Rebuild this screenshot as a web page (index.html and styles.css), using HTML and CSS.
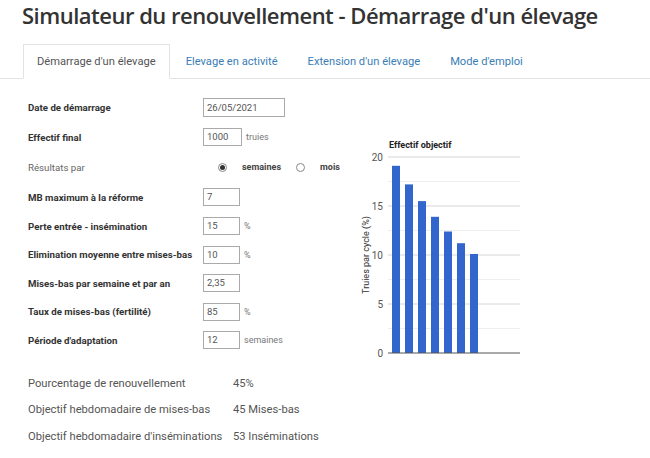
FILE: index.html
```html
<!DOCTYPE html>
<html lang="fr">
<head>
<meta charset="utf-8">
<title>Simulateur du renouvellement</title>
<link rel="stylesheet" href="styles.css">
</head>
<body>
<h1 class="title">Simulateur du renouvellement - Démarrage d'un élevage</h1>
<ul class="tabs">
  <li class="tab active">Démarrage d'un élevage</li>
  <li class="tab">Elevage en activité</li>
  <li class="tab">Extension d'un élevage</li>
  <li class="tab">Mode d'emploi</li>
</ul>
<div class="main">
  <div class="form">
    <div class="row r30"><span class="label">Date de démarrage</span><span class="field"><span class="input wide">26/05/2021</span></span></div>
    <div class="row r30"><span class="label">Effectif final</span><span class="field"><span class="input w39">1000</span><span class="unit">truies</span></span></div>
    <div class="row r30"><span class="label light">Résultats par</span><span class="field"><span class="radio checked"></span><span class="ropt">semaines</span><span class="radio"></span><span class="ropt">mois</span></span></div>
    <div class="row r30"><span class="label">MB maximum à la réforme</span><span class="field"><span class="input">7</span></span></div>
    <div class="row r28"><span class="label">Perte entrée - insémination</span><span class="field"><span class="input">15</span><span class="unit">%</span></span></div>
    <div class="row r28"><span class="label">Elimination moyenne entre mises-bas</span><span class="field"><span class="input">10</span><span class="unit">%</span></span></div>
    <div class="row r28"><span class="label">Mises-bas par semaine et par an</span><span class="field"><span class="input">2,35</span></span></div>
    <div class="row r28"><span class="label">Taux de mises-bas (fertilité)</span><span class="field"><span class="input">85</span><span class="unit">%</span></span></div>
    <div class="row r28"><span class="label">Période d'adaptation</span><span class="field"><span class="input">12</span><span class="unit">semaines</span></span></div>
  </div>
  <svg class="chart" width="180" height="235" viewBox="0 0 180 235">
    <text x="39" y="13" class="ctitle">Effectif objectif</text>
    <g class="minor">
      <line x1="38" y1="46.5" x2="170" y2="46.5"/>
      <line x1="38" y1="95.5" x2="170" y2="95.5"/>
      <line x1="38" y1="144.5" x2="170" y2="144.5"/>
      <line x1="38" y1="193.5" x2="170" y2="193.5"/>
    </g>
    <g class="major">
      <line x1="38" y1="22" x2="170" y2="22"/>
      <line x1="38" y1="71" x2="170" y2="71"/>
      <line x1="38" y1="120" x2="170" y2="120"/>
      <line x1="38" y1="169" x2="170" y2="169"/>
    </g>
    <g class="ylab">
      <text x="33" y="25.5">20</text>
      <text x="33" y="74.5">15</text>
      <text x="33" y="123.5">10</text>
      <text x="33" y="172.5">5</text>
      <text x="33" y="221.5">0</text>
    </g>
    <g class="bars">
      <rect x="42" y="30.8" width="8" height="187.2"/>
      <rect x="55" y="49.4" width="8" height="168.6"/>
      <rect x="68" y="66.1" width="8" height="151.9"/>
      <rect x="81" y="81.8" width="8" height="136.2"/>
      <rect x="94" y="96.5" width="8" height="121.5"/>
      <rect x="107" y="108.2" width="8" height="109.8"/>
      <rect x="120" y="119" width="8" height="99"/>
    </g>
    <line class="base" x1="38" y1="218" x2="170" y2="218"/>
    <text class="ytitle" x="0" y="0" transform="translate(19 120) rotate(-90)">Truies par cycle (%)</text>
  </svg>
</div>
<div class="results">
  <div class="rrow"><span>Pourcentage de renouvellement</span><span>45%</span></div>
  <div class="rrow"><span>Objectif hebdomadaire de mises-bas</span><span>45 Mises-bas</span></div>
  <div class="rrow"><span>Objectif hebdomadaire d'inséminations</span><span>53 Inséminations</span></div>
</div>
</body>
</html>
```
FILE: styles.css
```css
html, body {
  margin: 0;
  padding: 0;
  background: #fff;
}
body {
  font-family: Roboto, "Liberation Sans", sans-serif;
  color: #333;
}
.title {
  margin: 0;
  padding-left: 22px;
  font-family: "Open Sans", "Liberation Sans", sans-serif;
  font-weight: 600;
  font-size: 22px;
  line-height: 30px;
  letter-spacing: -0.5px;
  color: #333;
  white-space: nowrap;
}
.tabs {
  list-style: none;
  margin: 14px 0 0 0;
  padding: 0 0 0 23px;
  display: flex;
  border-bottom: 1px solid #e3e3e3;
}
.tab {
  margin-right: 2px;
  margin-bottom: -1px;
  padding: 0 13px;
  height: 33px;
  line-height: 33px;
  border: 1px solid transparent;
  font-size: 11.15px;
  color: #3a7db5;
  white-space: nowrap;
}
.tab.active {
  border-color: #e3e3e3;
  border-bottom-color: #fff;
  background: #fff;
  color: #555;
}
.main {
  display: flex;
  padding-top: 13px;
}
.form {
  width: 350px;
  padding-left: 28px;
  box-sizing: border-box;
}
.row {
  display: grid;
  grid-template-columns: 175px auto;
  align-items: center;
}
.r30 { height: 30px; }
.r28 { height: 28.5px; }
.label {
  font-size: 9.7px;
  font-weight: bold;
  color: #333;
  white-space: nowrap;
}
.label.light {
  font-weight: normal;
  color: #666;
}
.field {
  display: flex;
  align-items: center;
}
.input {
  box-sizing: border-box;
  width: 37px;
  height: 18px;
  border: 1px solid #aaa;
  padding: 0 3px;
  font-size: 9.5px;
  line-height: 16px;
  color: #555;
}
.input.wide { width: 82px; height: 19px; line-height: 17px; }
.input.w39 { width: 39px; }
.unit {
  margin-left: 4px;
  font-size: 9px;
  color: #777;
}
.radio {
  box-sizing: border-box;
  width: 9px;
  height: 9px;
  border: 1px solid #888;
  border-radius: 50%;
  margin-left: 15px;
  display: flex;
  align-items: center;
  justify-content: center;
}
.radio.checked::after {
  content: "";
  width: 5px;
  height: 5px;
  border-radius: 50%;
  background: #333;
}
.ropt {
  margin-left: 15px;
  font-size: 9px;
  font-weight: bold;
  color: #444;
}
.chart {
  display: block;
  margin-top: 43px;
  flex: none;
}
.ctitle {
  font-family: Roboto, "Liberation Sans", sans-serif;
  font-size: 9px;
  font-weight: bold;
  fill: #222;
}
.minor line { stroke: #eeeeee; stroke-width: 1; }
.major line { stroke: #d6d6d6; stroke-width: 1; }
.base { stroke: #555; stroke-width: 1; }
.ylab text {
  font-family: Roboto, "Liberation Sans", sans-serif;
  font-size: 10px;
  fill: #555;
  text-anchor: end;
}
.bars rect { fill: #3366cc; }
.ytitle {
  font-family: Roboto, "Liberation Sans", sans-serif;
  font-size: 9px;
  fill: #333;
  text-anchor: middle;
}
.results {
  padding-left: 28px;
}
.rrow {
  display: grid;
  grid-template-columns: 205px auto;
  align-items: center;
  height: 26.5px;
  font-size: 11.2px;
  color: #555;
  white-space: nowrap;
}
```
